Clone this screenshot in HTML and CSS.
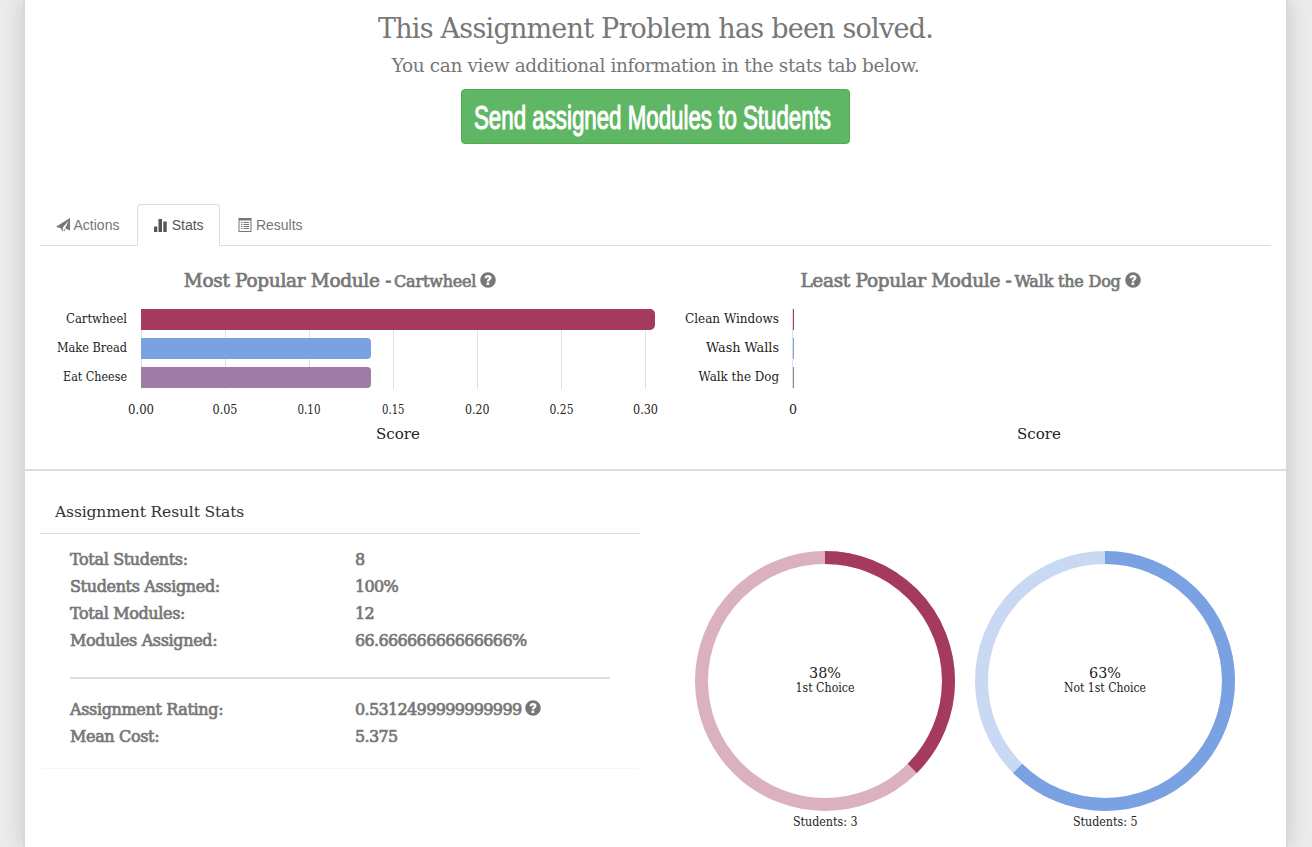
FILE: index.html
```html
<!DOCTYPE html>
<html lang="en">
<head>
<meta charset="utf-8">
<title>Assignment Problem</title>
<link rel="stylesheet" href="styles.css">
</head>
<body>
<svg class="defs" width="0" height="0">
  <symbol id="help" viewBox="0 0 16 16"><path fill-rule="evenodd" d="M8 .2a7.800 7.800 0 1 0 0 15.600A7.800 7.800 0 0 0 8 .2zM6.600 10.600h2.600v2.500H6.600zM4.600 6.200C4.700 4 6 3 8 3c2 0 3.500 1 3.500 2.800 0 2.100-2.200 2.200-2.200 3.700H6.700c0-2.200 2.200-2.300 2.200-3.500 0-.6-.4-.8-.9-.8-.6 0-1 .4-1 1z"/></symbol>
</svg>
<main class="page">
  <header class="intro">
    <h1 class="title">This Assignment Problem has been solved.</h1>
    <p class="subtitle">You can view additional information in the stats tab below.</p>
    <button class="send" type="button"><svg width="362" height="50"><text x="1" y="35" textLength="357" lengthAdjust="spacingAndGlyphs">Send assigned Modules to Students</text></svg></button>
  </header>

  <nav class="tabs">
    <a class="tab"><svg class="tab-icon" width="14" height="14" viewBox="0 0 14 14"><path d="M14 0v12.500L9.200 10.500 12.500 3 6.800 9.500V14L4.800 10.300 0 8.800zM7.800 11l1.600.7-1.600 2z"/></svg> Actions</a>
    <a class="tab active"><svg class="tab-icon" width="14" height="14" viewBox="0 0 14 14"><path d="M1 8.500h3.300V14H1zM5.500 1h3.500v13H5.500zM10.300 3.500h3.400V14h-3.400z"/></svg> Stats</a>
    <a class="tab"><svg class="tab-icon" width="14" height="14" viewBox="0 0 14 14"><path fill-rule="evenodd" d="M.5 0h13v14H.500zM1.500 2.500V13h11V2.500zM3 4h1.500v1H3zM5.500 4H11v1H5.500zM3 6h1.500v1H3zM5.500 6H11v1H5.500zM3 8h1.500v1H3zM5.500 8H11v1H5.500zM3 10h1.500v1H3zM5.500 10H11v1H5.500z"/></svg> Results</a>
  </nav>

  <section class="charts">
    <div class="chart-col">
      <h3 class="chart-title"><span class="kind">Most Popular Module -</span><span class="module">Cartwheel</span><svg class="help"><use href="#help"/></svg></h3>
      <svg class="chart" width="630" height="150">
        <g class="grid"><path d="M116.500 9v80M200.500 9v80M284.500 9v80M368.500 9v80M452.500 9v80M536.500 9v80M620.500 9v80"/></g>
        <path class="c1" d="M116 9h509a5 5 0 0 1 5 5v11a5 5 0 0 1-5 5H116z"/>
        <path class="c2" d="M116 38h226a4 4 0 0 1 4 4v13a4 4 0 0 1-4 4H116z"/>
        <path class="c3" d="M116 67h226a4 4 0 0 1 4 4v13a4 4 0 0 1-4 4H116z"/>
        <g class="label">
          <text x="41" y="23" textLength="61" lengthAdjust="spacingAndGlyphs">Cartwheel</text>
          <text x="32" y="52" textLength="70" lengthAdjust="spacingAndGlyphs">Make Bread</text>
          <text x="38" y="81" textLength="64" lengthAdjust="spacingAndGlyphs">Eat Cheese</text>
          <text x="103" y="114" textLength="26" lengthAdjust="spacingAndGlyphs">0.00</text>
          <text x="187.500" y="114" textLength="25" lengthAdjust="spacingAndGlyphs">0.05</text>
          <text x="272.500" y="114" textLength="23" lengthAdjust="spacingAndGlyphs">0.10</text>
          <text x="357" y="114" textLength="22.500" lengthAdjust="spacingAndGlyphs">0.15</text>
          <text x="440" y="114" textLength="24.500" lengthAdjust="spacingAndGlyphs">0.20</text>
          <text x="524.500" y="114" textLength="24" lengthAdjust="spacingAndGlyphs">0.25</text>
          <text x="608" y="114" textLength="25" lengthAdjust="spacingAndGlyphs">0.30</text>
        </g>
        <text class="axis" x="351" y="139" textLength="44" lengthAdjust="spacingAndGlyphs">Score</text>
      </svg>
    </div>
    <div class="chart-col">
      <h3 class="chart-title"><span class="kind">Least Popular Module -</span><span class="module">Walk the Dog</span><svg class="help"><use href="#help"/></svg></h3>
      <svg class="chart" width="630" height="150">
        <g class="grid"><path d="M137.500 9v80"/></g>
        <path class="c1" d="M138 9h1v21h-1z"/>
        <path class="c2" d="M138 38h1v21h-1z"/>
        <path class="c3" d="M138 67h1v21h-1z"/>
        <g class="label">
          <text x="30" y="23" textLength="94" lengthAdjust="spacingAndGlyphs">Clean Windows</text>
          <text x="51" y="52" textLength="73" lengthAdjust="spacingAndGlyphs">Wash Walls</text>
          <text x="43.500" y="81" textLength="80.500" lengthAdjust="spacingAndGlyphs">Walk the Dog</text>
          <text x="134" y="114" textLength="8" lengthAdjust="spacingAndGlyphs">0</text>
        </g>
        <text class="axis" x="362" y="139" textLength="44" lengthAdjust="spacingAndGlyphs">Score</text>
      </svg>
    </div>
  </section>

  <section class="results">
    <div class="panel">
      <h4 class="panel-title">Assignment Result Stats</h4>
      <dl class="stats">
        <dt>Total Students:</dt><dd>8</dd>
        <dt>Students Assigned:</dt><dd>100%</dd>
        <dt>Total Modules:</dt><dd>12</dd>
        <dt>Modules Assigned:</dt><dd>66.66666666666666%</dd>
      </dl>
      <hr class="rule">
      <dl class="stats">
        <dt>Assignment Rating:</dt><dd>0.5312499999999999<svg class="help"><use href="#help"/></svg></dd>
        <dt>Mean Cost:</dt><dd>5.375</dd>
      </dl>
    </div>
    <div class="donuts">
      <svg width="280" height="300">
        <circle class="ring pale1" cx="140" cy="141" r="123.500"/>
        <circle class="ring part1" cx="140" cy="141" r="123.500" pathLength="100" stroke-dasharray="37.500 62.500" transform="rotate(-90 140 141)"/>
        <text class="axis" x="124" y="138" textLength="32" lengthAdjust="spacingAndGlyphs">38%</text>
        <g class="label">
          <text x="110.500" y="152" textLength="59" lengthAdjust="spacingAndGlyphs">1st Choice</text>
          <text x="108" y="286" textLength="64.500" lengthAdjust="spacingAndGlyphs">Students: 3</text>
        </g>
      </svg>
      <svg width="280" height="300">
        <circle class="ring pale2" cx="140" cy="141" r="123.500"/>
        <circle class="ring part2" cx="140" cy="141" r="123.500" pathLength="100" stroke-dasharray="62.500 37.500" transform="rotate(-90 140 141)"/>
        <text class="axis" x="124" y="138" textLength="32" lengthAdjust="spacingAndGlyphs">63%</text>
        <g class="label">
          <text x="99" y="152" textLength="82" lengthAdjust="spacingAndGlyphs">Not 1st Choice</text>
          <text x="108" y="286" textLength="64.500" lengthAdjust="spacingAndGlyphs">Students: 5</text>
        </g>
      </svg>
    </div>
  </section>
</main>
</body>
</html>
```
FILE: styles.css
```css
* { box-sizing: border-box; }
html, body { margin: 0; height: 847px; overflow: hidden; }
body {
  background: #ebebeb;
  color: #777;
  font-family: "DejaVu Serif", serif;
}
.defs { display: block; }
h1, h3, h4, p, dl, dd { margin: 0; font-weight: normal; }
.page {
  width: 1265px;
  height: 847px;
  margin-left: 23px;
  background: #fff;
  border: solid #d8d8d8;
  border-width: 0 2px;
  box-shadow: 0 0 20px rgba(0, 0, 0, .15);
}
.intro {
  height: 204px;
  padding-top: 9px;
  display: flex;
  flex-direction: column;
  align-items: center;
}
.title { font-size: 27px; line-height: 40px; letter-spacing: -.77px; white-space: nowrap; }
.subtitle { font-size: 18.500px; line-height: 34px; letter-spacing: -.37px; white-space: nowrap; }
.send {
  margin-top: 6px;
  width: 389px;
  height: 55px;
  padding: 0 0 0 11px;
  border: 1px solid #4cae4c;
  border-radius: 4px;
  background: #5fb664;
  display: flex;
  align-items: center;
}
.send text {
  font-family: "Liberation Sans Narrow", "Liberation Sans", sans-serif;
  font-size: 33px;
  fill: #fff;
  stroke: #fff;
  stroke-width: 1.1px;
}
.send svg { flex: none; margin-top: 4px; overflow: visible; }
.tabs {
  height: 42px;
  margin: 0 15px;
  border-bottom: 1px solid #ddd;
  display: flex;
  gap: 2px;
  font: 14px/20px "Liberation Sans", Arial, sans-serif;
}
.tab {
  height: 42px;
  padding: 10px 15px;
  border: 1px solid transparent;
  border-radius: 4px 4px 0 0;
  white-space: nowrap;
}
.tab.active { color: #555; background: #fff; border-color: #ddd #ddd #fff; }
.tab-icon { fill: currentColor; vertical-align: -2px; margin-right: .4px; }
.charts { display: flex; height: 225px; border-bottom: 2px solid #ddd; }
.chart-col { flex: 1; min-width: 0; padding-top: 20px; }
.chart-col:first-child { flex: none; width: 630px; }
.chart-title {
  height: 30px;
  display: flex;
  justify-content: center;
  align-items: baseline;
  line-height: 30px;
  -webkit-text-stroke: .7px #777;
  white-space: nowrap;
}
.kind { font-size: 18.500px; letter-spacing: -.32px; }
.module { font-size: 16px; margin-left: 3px; letter-spacing: -.2px; }
.help { width: 16px; height: 16px; fill: #777; stroke: none; margin-left: 4px; }
.chart-title .help { align-self: flex-start; margin-top: 6px; }
.chart { display: block; margin-top: 4px; overflow: visible; }
.grid { stroke: #e0e0e0; fill: none; }
.c1 { fill: #a43b5c; }
.c2 { fill: #7aa1e2; }
.c3 { fill: #9f7ca5; }
.label { font-size: 12px; fill: #222; }
.axis { font-size: 15px; fill: #222; }
.results { display: flex; padding: 21px 0 0 15px; }
.panel {
  width: 600px;
  height: 276px;
  border-radius: 4px;
  box-shadow: 0 1px 1px rgba(0, 0, 0, .05);
}
.panel-title {
  height: 42px;
  padding-left: 15px;
  border-bottom: 1px solid #ddd;
  color: #333;
  font-size: 15.500px;
  line-height: 40px;
  letter-spacing: -.13px;
}
.stats {
  display: grid;
  grid-template-columns: 285px 1fr;
  grid-auto-rows: 27px;
  padding: 12px 30px 0;
  font-size: 16px;
  line-height: 27px;
  letter-spacing: -.35px;
  -webkit-text-stroke: .7px #777;
}
.stats dd { letter-spacing: -.65px; }
.stats .help { vertical-align: -1px; }
.rule { margin: 23px 30px 5px; border: 0; height: 2px; background: #ddd; }
.donuts { display: flex; margin: 48px 0 0 45px; }
.ring { fill: none; stroke-width: 13px; }
.pale1 { stroke: #dbb1be; }
.part1 { stroke: #a43b5c; }
.pale2 { stroke: #c9d9f4; }
.part2 { stroke: #7aa1e2; }
```
